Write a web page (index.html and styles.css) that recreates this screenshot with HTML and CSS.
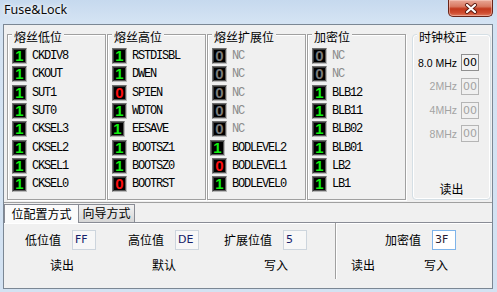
FILE: index.html
```html
<!DOCTYPE html>
<html>
<head>
<meta charset="utf-8">
<link rel="stylesheet" href="styles.css">
</head>
<body>
<div class="window">
  <div class="titlebar">
    <span class="title">Fuse&amp;Lock</span>
    <div class="close">
      <svg width="14" height="11" viewBox="0 0 14 11">
        <path d="M3 2 L11 9 M11 2 L3 9" stroke="#5c1a10" stroke-width="4" stroke-linecap="round"/>
        <path d="M3 2 L11 9 M11 2 L3 9" stroke="#ffffff" stroke-width="2.2" stroke-linecap="round"/>
      </svg>
    </div>
  </div>
  <div class="client">
    <div class="fuses">
      <fieldset class="group">
        <legend>熔丝低位</legend>
        <div class="row"><span class="bit on">1</span><span class="name">CKDIV8</span></div>
        <div class="row"><span class="bit on">1</span><span class="name">CKOUT</span></div>
        <div class="row"><span class="bit on">1</span><span class="name">SUT1</span></div>
        <div class="row"><span class="bit on">1</span><span class="name">SUT0</span></div>
        <div class="row"><span class="bit on">1</span><span class="name">CKSEL3</span></div>
        <div class="row"><span class="bit on">1</span><span class="name">CKSEL2</span></div>
        <div class="row"><span class="bit on">1</span><span class="name">CKSEL1</span></div>
        <div class="row"><span class="bit on">1</span><span class="name">CKSEL0</span></div>
      </fieldset>
      <fieldset class="group">
        <legend>熔丝高位</legend>
        <div class="row"><span class="bit on">1</span><span class="name">RSTDISBL</span></div>
        <div class="row"><span class="bit on">1</span><span class="name">DWEN</span></div>
        <div class="row"><span class="bit off">0</span><span class="name">SPIEN</span></div>
        <div class="row"><span class="bit on">1</span><span class="name">WDTON</span></div>
        <div class="row shifted"><span class="bit on">1</span><span class="name">EESAVE</span></div>
        <div class="row"><span class="bit on">1</span><span class="name">BOOTSZ1</span></div>
        <div class="row"><span class="bit on">1</span><span class="name">BOOTSZ0</span></div>
        <div class="row"><span class="bit off">0</span><span class="name">BOOTRST</span></div>
      </fieldset>
      <fieldset class="group">
        <legend>熔丝扩展位</legend>
        <div class="row"><span class="bit nc">0</span><span class="name dim">NC</span></div>
        <div class="row"><span class="bit nc">0</span><span class="name dim">NC</span></div>
        <div class="row"><span class="bit nc">0</span><span class="name dim">NC</span></div>
        <div class="row"><span class="bit nc">0</span><span class="name dim">NC</span></div>
        <div class="row"><span class="bit nc">0</span><span class="name dim">NC</span></div>
        <div class="row shifted"><span class="bit on">1</span><span class="name">BODLEVEL2</span></div>
        <div class="row"><span class="bit off">0</span><span class="name">BODLEVEL1</span></div>
        <div class="row"><span class="bit on">1</span><span class="name">BODLEVEL0</span></div>
      </fieldset>
      <fieldset class="group">
        <legend>加密位</legend>
        <div class="row"><span class="bit nc">0</span><span class="name dim">NC</span></div>
        <div class="row"><span class="bit nc">0</span><span class="name dim">NC</span></div>
        <div class="row"><span class="bit on">1</span><span class="name">BLB12</span></div>
        <div class="row"><span class="bit on">1</span><span class="name">BLB11</span></div>
        <div class="row"><span class="bit on">1</span><span class="name">BLB02</span></div>
        <div class="row"><span class="bit on">1</span><span class="name">BLB01</span></div>
        <div class="row"><span class="bit on">1</span><span class="name">LB2</span></div>
        <div class="row"><span class="bit on">1</span><span class="name">LB1</span></div>
      </fieldset>
      <fieldset class="clock">
        <legend>时钟校正</legend>
        <div class="crows">
          <div class="crow"><span class="clabel">8.0 MHz</span><span class="cbox">00</span></div>
          <div class="crow disabled"><span class="clabel">2MHz</span><span class="cbox">00</span></div>
          <div class="crow disabled"><span class="clabel">4MHz</span><span class="cbox">00</span></div>
          <div class="crow disabled"><span class="clabel">8MHz</span><span class="cbox">00</span></div>
        </div>
        <div class="cread">读出</div>
      </fieldset>
    </div>
    <div class="tabs">
      <div class="tab active">位配置方式</div>
      <div class="tab">向导方式</div>
    </div>
    <div class="page">
      <div class="bits-section">
        <div class="fields">
          <div class="field f-low"><span class="flabel">低位值</span><span class="val">FF</span></div>
          <div class="field f-high"><span class="flabel">高位值</span><span class="val">DE</span></div>
          <div class="field f-ext"><span class="flabel">扩展位值</span><span class="val">5</span></div>
        </div>
        <div class="actions">
          <span class="act a-read">读出</span>
          <span class="act a-default">默认</span>
          <span class="act a-write">写入</span>
        </div>
      </div>
      <div class="separator"></div>
      <div class="lock-section">
        <div class="fields">
          <div class="field f-lock"><span class="flabel">加密值</span><span class="val focus">3F</span></div>
        </div>
        <div class="actions">
          <span class="act a-lread">读出</span>
          <span class="act a-lwrite">写入</span>
        </div>
      </div>
    </div>
  </div>
</div>
</body>
</html>
```

FILE: styles.css
```css
html, body {
  margin: 0;
  padding: 0;
}

body {
  width: 497px;
  height: 292px;
  overflow: hidden;
  font-family: "Noto Sans CJK SC", "Noto Sans", sans-serif;
  font-size: 12px;
  color: #000;
}

.window {
  width: 497px;
  height: 292px;
  display: flex;
  flex-direction: column;
  background: linear-gradient(180deg, #c6d9ee 0px, #d4e3f3 22px, #d3e2f2 100%);
}

.titlebar {
  height: 24px;
  flex: none;
  display: flex;
  align-items: flex-start;
}

.title {
  font-family: "Noto Sans", sans-serif;
  font-size: 12.5px;
  line-height: 16px;
  margin: 2px 0 0 4px;
  color: #0a0a0a;
  text-shadow: 0 0 6px #ffffff, 0 0 3px #ffffff;
}

.close {
  margin-left: auto;
  margin-right: 4px;
  width: 45px;
  height: 17px;
  box-sizing: border-box;
  border: 1px solid #6a2418;
  border-top: none;
  border-radius: 0 0 5px 5px;
  background: linear-gradient(180deg, #e9a797 0%, #d97a63 40%, #c2391e 55%, #cf4c30 80%, #df7b5f 100%);
  box-shadow: inset 0 0 0 1px rgba(255, 220, 210, 0.45);
  display: flex;
  align-items: center;
  justify-content: center;
}

.close svg {
  display: block;
}

.client {
  flex: 1;
  margin: 0 4px 3px 3px;
  border: 1px solid #7b8794;
  background: #f0f0f0;
  display: flex;
  flex-direction: column;
}

/* ---------- top fuse panel ---------- */
.fuses {
  height: 177px;
  flex: none;
  border-bottom: 1px solid #a0a0a0;
  padding-left: 3px;
  display: flex;
  align-items: flex-start;
}

.group,
.clock {
  margin: 0;
  min-width: 0;
  box-sizing: border-box;
  height: 175px;
}

.group {
  width: 99px;
  margin-right: 1px;
  padding: 3px 4px 0 4px;
  border: 1px solid #a0a0a0;
  box-shadow: inset 1px 1px 0 #ffffff, 1px 1px 0 #ffffff;
}

legend {
  padding: 5px 2px 0 2px;
  line-height: 14px;
  font-size: 12px;
  background: #f0f0f0;
}

.row {
  height: 18.3px;
  display: flex;
  align-items: center;
}

.row.shifted .bit {
  margin-left: -2px;
  margin-right: 7px;
}

.bit {
  width: 15px;
  height: 16px;
  box-sizing: border-box;
  margin-right: 5px;
  background: #000;
  border: 1px solid;
  border-color: #6f6f6f #b9b9b9 #b9b9b9 #6f6f6f;
  box-shadow: inset 1px 1px 0 #3c3c3c, inset -1px -1px 0 #595959;
  font-family: "Liberation Sans", sans-serif;
  font-weight: bold;
  font-size: 15px;
  line-height: 14px;
  text-align: center;
}

.bit.on { color: #10f010; }
.bit.off { color: #ff1010; }
.bit.nc { color: #7a7a7a; }

.name {
  font-family: "Liberation Mono", monospace;
  font-size: 12px;
  letter-spacing: -1.2px;
  line-height: 14px;
  color: #000;
}

.name.dim { color: #8c8c8c; }

.clock {
  width: 79px;
  margin-left: 5px;
  padding: 10px 11px 0 4px;
  border: 1px solid #d5dfe5;
  border-radius: 4px;
  box-shadow: inset 0 0 0 1px #ffffff;
}

.crows {
  display: flex;
  flex-direction: column;
  gap: 6.8px;
}

.crow {
  height: 17px;
  display: flex;
  align-items: center;
  justify-content: flex-end;
  gap: 4px;
}

.clabel {
  font-family: "Liberation Sans", sans-serif;
  font-size: 10.5px;
}

.cbox {
  width: 18px;
  height: 17px;
  box-sizing: border-box;
  border: 1px solid #8f8f8f;
  background: #f3f3f3;
  font-family: "DejaVu Sans", sans-serif;
  font-size: 11px;
  line-height: 15px;
  padding-left: 1px;
}

.crow.disabled .clabel,
.crow.disabled .cbox {
  color: #a3a3a3;
}

.crow.disabled .cbox {
  border-color: #b5b5b5;
  background: #f0f0f0;
}

.cread {
  margin-top: 38.6px;
  margin-left: 7px;
  text-align: center;
  line-height: 16px;
}

/* ---------- tabs ---------- */
.tabs {
  height: 19px;
  flex: none;
  display: flex;
  align-items: flex-end;
  position: relative;
  z-index: 1;
}

.tab {
  box-sizing: border-box;
  height: 18px;
  border: 1px solid #898c95;
  border-bottom: none;
  line-height: 16px;
  text-align: center;
}

.tab.active {
  width: 75px;
  height: 19px;
  margin-bottom: -1px;
  background: #fbfbfb;
  line-height: 18px;
}

.tab:not(.active) {
  width: 56px;
  border-left: none;
  background: linear-gradient(180deg, #f2f2f2 0%, #e4e4e4 50%, #d6d6d6 100%);
}

.page {
  flex: 1;
  border-top: 1px solid #898c95;
  box-shadow: inset 0 1px 0 #ffffff;
  display: flex;
  align-items: flex-start;
}

.bits-section {
  width: 331px;
  padding-top: 7px;
}

.separator {
  width: 1px;
  height: 56px;
  background: #a0a0a0;
  border-right: 1px solid #ffffff;
}

.lock-section {
  flex: 1;
  padding-top: 7px;
}

.fields {
  display: flex;
  align-items: center;
  height: 20px;
}

.field {
  display: flex;
  align-items: center;
  gap: 11px;
}

.flabel {
  line-height: 16px;
}

.f-low { margin-left: 21px; }
.f-high { margin-left: 32px; }
.f-ext { margin-left: 25px; }
.f-lock { margin-left: 48px; }

.val {
  width: 24px;
  height: 20px;
  box-sizing: border-box;
  border: 1px solid #cdd5dd;
  background: #f7f7f7;
  font-family: "DejaVu Sans", sans-serif;
  font-size: 11px;
  line-height: 18px;
  padding-left: 2px;
  color: #15206a;
}

.val.focus {
  border-color: #7eb4ea;
  background: #ffffff;
  color: #2a1a30;
}

.actions {
  display: flex;
  margin-top: 7px;
  line-height: 16px;
}

.a-read { margin-left: 46px; }
.a-default { margin-left: 78px; }
.a-write { margin-left: 88px; }
.a-lread { margin-left: 14px; }
.a-lwrite { margin-left: 49px; }
```
